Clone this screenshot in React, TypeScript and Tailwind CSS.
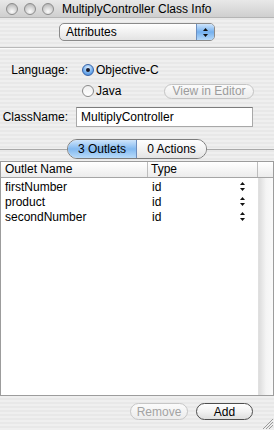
import React from "react";

const font = "font-['Liberation_Sans',Arial,sans-serif]";

function Light() {
  return (
    <div className="w-[12px] h-[12px] rounded-full border border-[#8c8c8c] bg-[radial-gradient(circle_at_50%_75%,#fbfbfb_0%,#d8d8d8_45%,#a9a9a9_100%)]" />
  );
}

function UpDown({ className = "" }: { className?: string }) {
  return (
    <svg width="5" height="9" viewBox="0 0 5 9" className={className}>
      <polygon points="2.5,0 5,3 0,3" fill="#111" />
      <polygon points="0,6 5,6 2.5,9" fill="#111" />
    </svg>
  );
}

function Radio({ on }: { on: boolean }) {
  if (on)
    return (
      <div className="w-[12px] h-[12px] rounded-full border border-[#3a64a8] bg-[radial-gradient(circle_at_50%_30%,#e2f0ff_0%,#7fb6f0_50%,#3a82d8_100%)] flex items-center justify-center">
        <div className="w-[4px] h-[4px] rounded-full bg-[#1a1a2a]" />
      </div>
    );
  return (
    <div className="w-[12px] h-[12px] rounded-full border border-[#8a8a8a] bg-gradient-to-b from-[#f0f0f0] to-[#ffffff]" />
  );
}

const rows = ["firstNumber", "product", "secondNumber"];

export default function App() {
  return (
    <div className={`${font} w-[274px] h-[430px] relative overflow-hidden flex flex-col text-[12px] text-black bg-[repeating-linear-gradient(to_bottom,#efefef_0px,#efefef_2px,#e8e8e8_2px,#e8e8e8_4px)]`}>
      {/* title bar */}
      <div className="h-[18px] flex items-center bg-gradient-to-b from-[#e8e8e8] to-[#cfcfcf] border-b border-[#b5b5b5]">
        <div className="flex gap-[6px] ml-[6px]">
          <Light />
          <Light />
          <Light />
        </div>
        <span className="ml-[8px] text-[12px] leading-none">MultiplyController Class Info</span>
      </div>

      {/* popup */}
      <div className="mt-[5px] mx-auto w-[156px] h-[18px] flex rounded-[5px] border border-[#8a8a8a] overflow-hidden bg-gradient-to-b from-[#ffffff] via-[#f1f1f1] to-[#e3e3e3]">
        <span className="flex-1 pl-[6px] leading-[16px]">Attributes</span>
        <div className="w-[18px] border-l border-[#6d8fbf] flex items-center justify-center bg-gradient-to-b from-[#cfe5fb] via-[#74b0ee] to-[#b5d8f8]">
          <UpDown />
        </div>
      </div>

      {/* separator */}
      <div className="mt-[6px] h-px bg-[#b9b9b9] shadow-[0_1px_0_#fafafa]" />

      {/* language */}
      <div className="mt-[15px] h-[14px] flex items-center">
        <span className="w-[68px] text-right">Language:</span>
        <div className="ml-[14px]"><Radio on /></div>
        <span className="ml-[2px]">Objective-C</span>
      </div>
      <div className="mt-[6px] h-[16px] flex items-center">
        <div className="ml-[82px]"><Radio on={false} /></div>
        <span className="ml-[2px]">Java</span>
        <div className="ml-auto mr-[20px] w-[90px] h-[15px] rounded-full border border-[#c4c4c4] bg-gradient-to-b from-[#fbfbfb] to-[#ececec] text-[#9c9c9c] flex items-center justify-center leading-none">
          View in Editor
        </div>
      </div>

      {/* classname */}
      <div className="mt-[8px] h-[20px] flex items-center">
        <span className="w-[68px] text-right">ClassName:</span>
        <div className="ml-[8px] w-[177px] h-[20px] bg-white border border-[#a8a8a8] border-t-[#7c7c7c] pl-[4px] flex items-center">
          MultiplyController
        </div>
      </div>

      {/* segmented */}
      <div className="mt-[12px] h-[20px] flex items-center">
        <div className="flex-1 h-px bg-[#a9a9a9]" />
        <div className="w-[140px] h-[20px] flex rounded-full border border-[#7d7d7d] overflow-hidden">
          <div className="w-[69px] flex items-center justify-center border-r border-[#6c8cbc] bg-gradient-to-b from-[#cfe5fb] via-[#82b9f0] to-[#b9dbf9]">
            3 Outlets
          </div>
          <div className="flex-1 flex items-center justify-center bg-gradient-to-b from-[#ffffff] via-[#f3f3f3] to-[#e4e4e4]">
            0 Actions
          </div>
        </div>
        <div className="flex-1 h-px bg-[#a9a9a9]" />
      </div>

      {/* table */}
      <div className="mt-[2px] h-[235px] border border-[#9c9c9c] flex flex-col bg-white">
        <div className="h-[16px] flex border-b border-[#a5a5a5] bg-gradient-to-b from-[#ffffff] to-[#ececec]">
          <div className="w-[147px] border-r border-[#bdbdbd] pl-[4px] leading-[15px]">Outlet Name</div>
          <div className="w-[110px] border-r border-[#bdbdbd] pl-[3px] leading-[15px]">Type</div>
          <div className="flex-1" />
        </div>
        <div className="flex-1 flex">
          <div className="flex-1 pt-[1px]">
            {rows.map((r) => (
              <div key={r} className="h-[15px] flex items-center">
                <span className="w-[147px] pl-[4px]">{r}</span>
                <span className="pl-[4px] flex-1">id</span>
                <UpDown className="mr-[13px]" />
              </div>
            ))}
          </div>
          <div className="w-[15px] bg-gradient-to-r from-[#dcdcdc] via-[#f4f4f4] to-[#fafafa] border-l border-[#e0e0e0]" />
        </div>
      </div>

      {/* buttons */}
      <div className="mt-[7px] flex justify-end gap-[8px] mr-[21px]">
        <div className="w-[58px] h-[17px] rounded-full border border-[#c6c6c6] bg-gradient-to-b from-[#fbfbfb] to-[#ececec] text-[#a3a3a3] flex items-center justify-center leading-none">
          Remove
        </div>
        <div className="w-[57px] h-[17px] rounded-full border border-[#4e4e4e] bg-gradient-to-b from-[#ffffff] via-[#f2f2f2] to-[#dedede] flex items-center justify-center leading-none">
          Add
        </div>
      </div>

      {/* resize grip */}
      <svg width="11" height="11" viewBox="0 0 11 11" className="absolute right-[1px] bottom-[1px]">
        <line x1="1" y1="11" x2="11" y2="1" stroke="#9a9a9a" strokeWidth="1" />
        <line x1="4" y1="11" x2="11" y2="4" stroke="#9a9a9a" strokeWidth="1" />
        <line x1="7" y1="11" x2="11" y2="7" stroke="#9a9a9a" strokeWidth="1" />
      </svg>
    </div>
  );
}
